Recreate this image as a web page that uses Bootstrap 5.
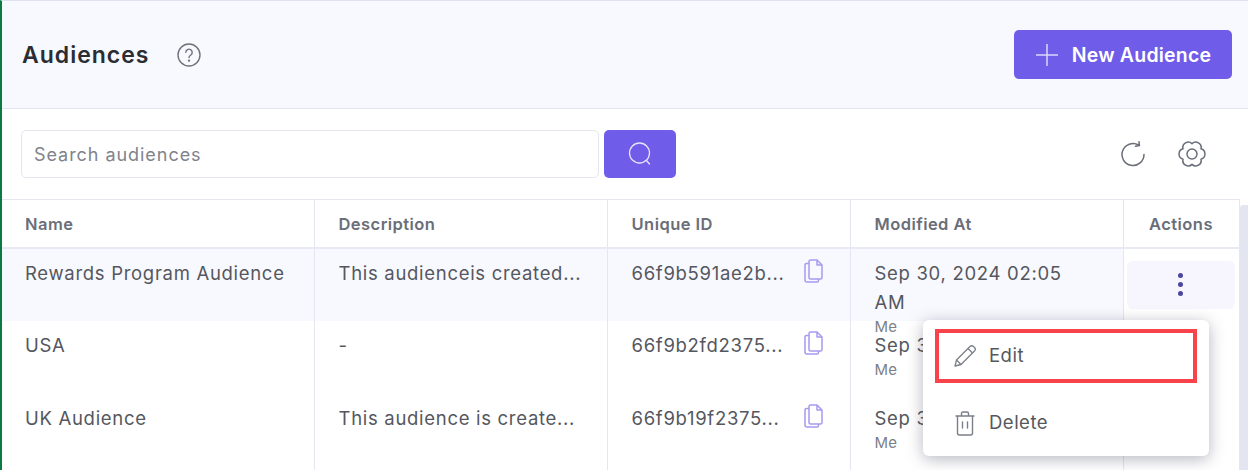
<!DOCTYPE html>
<html lang="en">
<head>
  <meta charset="UTF-8">
  <title>Audiences</title>
  <link href="https://cdn.jsdelivr.net/npm/bootstrap@5.3.3/dist/css/bootstrap.min.css" rel="stylesheet">
  <style>
    html, body { height: 470px; overflow: hidden; }
    body { font-family: Inter, "Liberation Sans", sans-serif; color: #4b4d55; background: #fff; }
    .page { position: relative; height: 470px; overflow: hidden; border-left: 2px solid #0b7a43; border-top: 1px solid #dfe3ef; }
    .page-head { height: 108px; background: #f8f9fe; border-bottom: 1px solid #e2e6f2; padding: 0 16px 0 20px; }
    .page-title { font-size: 23px; font-weight: 600; color: #2b2d33; margin: 0; padding-top: 2px; letter-spacing: 1px; }
    .help { margin-left: 27px; }
    .btn-brand { background: #6f5ce8; border: 0; border-radius: 5px; color: #fff; font-weight: 600; font-size: 19.5px; letter-spacing: .2px; height: 49px; width: 218px; gap: 13px; padding: 2px 0 0 2px; }
    .btn-brand svg { margin-top: -2px; margin-left: -2px; }
    .btn-brand:hover { background: #6f5ce8; color: #fff; }
    .toolbar { height: 90px; padding: 0 42px 0 19px; }
    .search { width: 578px; height: 48px; border: 1px solid #e4e7f1; border-radius: 5px; font-size: 18px; letter-spacing: .95px; color: #4b4d55; padding: 0 12px; }
    .search::placeholder { color: #80838c; }
    .btn-search { background: #6f5ce8; border: 0; border-radius: 5px; width: 72px; height: 48px; margin-left: 5px; padding: 0; }
    .btn-search:hover { background: #6f5ce8; }
    .tool-icon { margin-left: 32px; }
    .grid-wrap { width: 1237px; margin-left: -1px; }
    table.aud { table-layout: fixed; width: 1238px; margin: 0; border-top: 1px solid #e4e7f1; }
    table.aud th { height: 48px; font-size: 16.5px; font-weight: 600; letter-spacing: .45px; color: #6a6e78; padding: 2px 0 0 24px; vertical-align: middle; border-bottom: 2px solid #e7eaf4; border-right: 1px solid #e4e7f1; }
    table.aud td { padding: 0; font-size: 18.5px; letter-spacing: .7px; color: #55575e; border-bottom: 0; border-right: 1px solid #e4e7f1; vertical-align: top; box-shadow: none; }
    table.aud th.act, table.aud td.act { border-left: 1px solid #c9ccd4; padding: 0; text-align: center; }
    table.aud th.act { padding-top: 2px; }
    .cell { height: 72.5px; padding: 10px 12px 0 24px; line-height: 29px; white-space: nowrap; }
    .cell.wrap { white-space: normal; padding-right: 40px; }
    .row-on td:not(.act) { background: #f8f9fe; }
    .uid { display: flex; justify-content: space-between; padding-right: 27px; }
    .who { font-size: 15px; letter-spacing: .2px; line-height: 18px; color: #7b7f89; margin-top: 1px; }
    .kebab { background: #f7f5fd; border-radius: 6px; width: 108px; height: 48px; margin: 12px 0 0 3px; border: 0; padding: 0; }
    .dot { width: 5px; height: 5px; background: #4c46a0; }
    .scroll-thumb { position: absolute; right: 0; top: 204px; width: 8px; height: 266px; background: #e3e5f1; border-radius: 3px 0 0 0; }
    .menu-pop.dropdown-menu { position: absolute; left: 921px; top: 319px; width: 286px; height: 136px; padding: 9px 12px; border: 0; border-radius: 6px; box-shadow: 0 3px 16px rgba(60,64,90,.38); display: block; margin: 0; }
    .menu-pop .dropdown-item { display: flex; align-items: center; gap: 12px; height: 52px; padding: 0 0 0 18px; font-size: 18.5px; letter-spacing: .5px; color: #55575e; }
    .menu-pop .dropdown-item:hover { background: none; }
    .menu-pop .marked { height: 54px; border: 4px solid #f9434a; padding-left: 14px; }
    .menu-pop .dropdown-item + .dropdown-item { margin-top: 14px; padding-left: 20px; gap: 14px; }
  </style>
</head>
<body>
  <div class="page">
    <div class="page-head d-flex align-items-center justify-content-between">
      <div class="d-flex align-items-center">
        <h1 class="page-title">Audiences</h1>
        <svg class="help" width="24" height="24" viewBox="0 0 24 24" fill="none" stroke="#6f727b" stroke-width="1.4" stroke-linecap="round">
          <circle cx="12" cy="12" r="11"/>
          <path d="M8.8 9.3a3.2 3.2 0 1 1 5 2.7c-1.1.7-1.8 1.3-1.8 2.6"/>
          <circle cx="12" cy="17.6" r=".5" fill="#6f727b"/>
        </svg>
      </div>
      <button class="btn btn-brand d-flex align-items-center justify-content-center">
        <svg width="24" height="24" viewBox="0 0 24 24" fill="none" stroke="#dcd7fb" stroke-width="1.5"><path d="M12 1v22M1 12h22"/></svg>
        New Audience
      </button>
    </div>

    <div class="toolbar d-flex align-items-center">
      <input class="form-control search shadow-none" type="text" placeholder="Search audiences">
      <button class="btn btn-search d-flex align-items-center justify-content-center">
        <svg width="26" height="26" viewBox="0 0 26 26" fill="none" stroke="#e6e2fc" stroke-width="1.3" stroke-linecap="round"><circle cx="12.5" cy="12" r="10"/><path d="M19.5 19.5l3 3.5"/></svg>
      </button>
      <div class="ms-auto d-flex align-items-center">
        <svg class="tool-icon" width="26" height="26" viewBox="0 0 26 26" fill="none" stroke="#6a6e78" stroke-width="1.5" stroke-linecap="round" stroke-linejoin="round"><path d="M24 13.5A11 11 0 1 1 18.5 4"/><path d="M19 .8l.4 3.8-3.9.7"/></svg>
        <svg class="tool-icon" width="28" height="28" viewBox="0 0 28 28" fill="none" stroke="#6a6e78" stroke-width="1.5" stroke-linejoin="round"><path d="M14 3.6A5.4 5.4 0 0 1 23 8.8A5.4 5.4 0 0 1 23 19.2A5.4 5.4 0 0 1 14 24.4A5.4 5.4 0 0 1 5 19.2A5.4 5.4 0 0 1 5 8.8A5.4 5.4 0 0 1 14 3.6z"/><circle cx="14" cy="14" r="5"/></svg>
      </div>
    </div>

    <div class="grid-wrap">
      <table class="table aud">
        <colgroup>
          <col style="width:313px"><col style="width:293px"><col style="width:243px"><col style="width:273px"><col style="width:116px">
        </colgroup>
        <thead>
          <tr><th>Name</th><th>Description</th><th>Unique ID</th><th>Modified At</th><th class="act">Actions</th></tr>
        </thead>
        <tbody id="rows"></tbody>
      </table>
    </div>

    <div class="scroll-thumb"></div>

    <div class="dropdown-menu menu-pop">
      <a class="dropdown-item marked" href="#">
        <svg width="24" height="24" viewBox="0 0 24 24" fill="none" stroke="#7b7f89" stroke-width="1.3" stroke-linejoin="round"><path d="M2 22l1.5-6L17 2.5c1-1 2.5-1 3.5 0l1 1c1 1 1 2.5 0 3.5L8 20.5z"/><path d="M15 4.5l4.5 4.5M3.5 16L8 20.5"/></svg>
        Edit
      </a>
      <a class="dropdown-item" href="#">
        <svg width="20" height="25" viewBox="0 0 20 25" fill="none" stroke="#7b7f89" stroke-width="1.4" stroke-linecap="round" stroke-linejoin="round"><path d="M1 5h18M6.5 5V2.5a1.5 1.5 0 0 1 1.5-1.5h4a1.5 1.5 0 0 1 1.5 1.5V5M2.5 5v17a2 2 0 0 0 2 2h11a2 2 0 0 0 2-2V5M7.5 11v6M12.5 11v6"/></svg>
        Delete
      </a>
    </div>
  </div>

  <script>
    const copyIcon = '<svg width="19" height="24" viewBox="0 0 19 24" fill="none" stroke="#a59bef" stroke-width="1.5" stroke-linejoin="round"><path d="M5 2.5a1.5 1.5 0 0 1 1.5-1.5h6.5l5 5v12.5a1.5 1.5 0 0 1-1.5 1.5h-10a1.5 1.5 0 0 1-1.5-1.5z"/><path d="M5 4.5h-2.5a1.5 1.5 0 0 0-1.5 1.5v15a2 2 0 0 0 2 2h10a1.5 1.5 0 0 0 1.5-1.5v-1.5"/><path d="M13 1v5h5"/></svg>';
    const kebab = '<button class="kebab d-flex flex-column align-items-center justify-content-center gap-1"><span class="d-block rounded-circle dot"></span><span class="d-block rounded-circle dot"></span><span class="d-block rounded-circle dot"></span></button>';
    const audiences = [
      { name: 'Rewards Program Audience', desc: 'This audienceis created...', id: '66f9b591ae2b...', date: 'Sep 30, 2024 02:05 AM', on: true },
      { name: 'USA', desc: '-', id: '66f9b2fd2375...', date: 'Sep 30, 2024 01:45 AM' },
      { name: 'UK Audience', desc: 'This audience is create...', id: '66f9b19f2375...', date: 'Sep 30, 2024 01:40 AM' }
    ];
    // last row is blank, it only carries the column lines down to the fold
    document.getElementById('rows').innerHTML = audiences.map(a => `
      <tr class="${a.on ? 'row-on' : ''}">
        <td><div class="cell">${a.name}</div></td>
        <td><div class="cell">${a.desc}</div></td>
        <td><div class="cell uid"><span>${a.id}</span>${copyIcon}</div></td>
        <td><div class="cell ${a.on ? 'wrap' : ''}">${a.date}<div class="who">Me</div></div></td>
        <td class="act">${a.on ? kebab : ''}</td>
      </tr>`).join('') + '<tr><td><div class="cell"></div></td><td></td><td></td><td></td><td class="act"></td></tr>';
  </script>
  <script src="https://cdn.jsdelivr.net/npm/bootstrap@5.3.3/dist/js/bootstrap.bundle.min.js"></script>
</body>
</html>
